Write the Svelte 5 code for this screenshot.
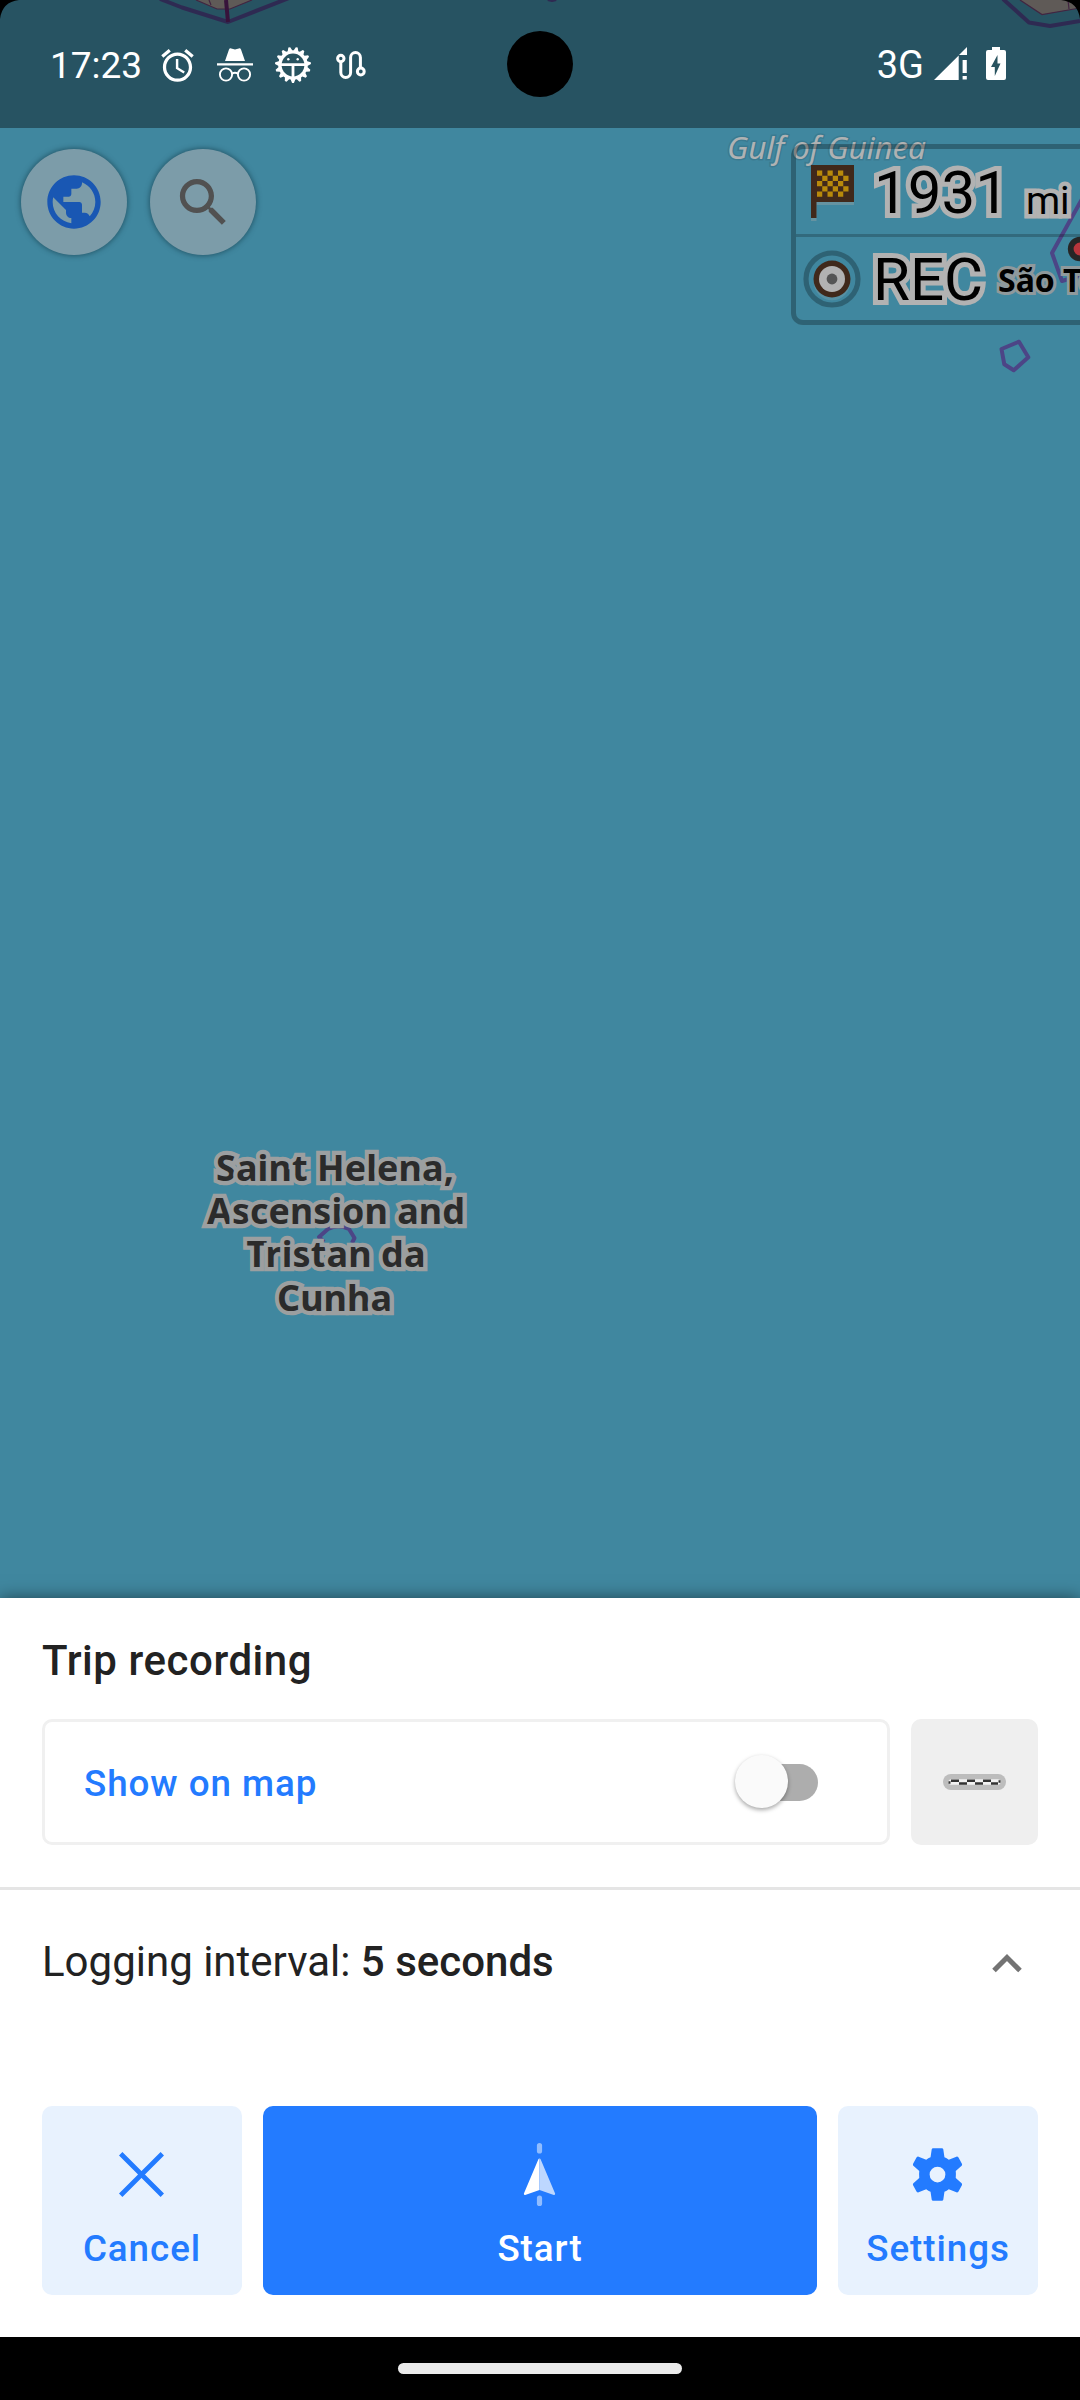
<script>
  // Toothed outline of the bug icon, 15 teeth around the centre (18, 18)
  const teeth = 15;
  const bugTeeth = Array.from({ length: teeth * 4 }, (_, i) => {
    const outer = i % 4 < 2;
    const r = outer ? 18 : 14.8;
    const a = ((i - 0.5) / (teeth * 4)) * Math.PI * 2 - Math.PI / 2 + 0.21;
    return `${(18 + r * Math.cos(a)).toFixed(2)},${(18 + r * Math.sin(a)).toFixed(2)}`;
  }).join(' ');

  const flagCells = Array.from({ length: 30 }, (_, i) => ({ x: i % 6, y: Math.floor(i / 6) }))
    .filter((c) => (c.x + c.y) % 2 === 0);

  const countryLines = [
    { text: 'Saint Helena,', x: 335, y: 1180.5, w: 238 },
    { text: 'Ascension and', x: 336, y: 1224, w: 258 },
    { text: 'Tristan da', x: 336, y: 1267, w: 179 },
    { text: 'Cunha', x: 334.5, y: 1311, w: 115 }
  ];

  let showOnMap = $state(false);
</script>

<div class="screen">
  <svg class="map" width="1080" height="1598" viewBox="0 0 1080 1598">
    <g fill="#9a938d">
      <path d="M196 0L217 9H230L252 0Z" />
      <path d="M1020 0L1042 14.5L1080 8V0Z" />
    </g>
    <g fill="none" stroke="#6b3c6a" stroke-width="1.2">
      <path d="M196 0L217 9H230L252 0M209 0L211 5M1020 0L1042 14.5L1080 8M1068 0L1069 9" />
    </g>
    <g fill="none" stroke="#4c4586" stroke-width="4" stroke-linejoin="round">
      <path d="M160 -1L182 7.500L228 22L289 -2" />
      <path d="M226 0L228 22" stroke="#5a2060" />
      <path d="M1003 -1L1029 22.500L1050 26L1080 21" />
      <path d="M548 -1L552 0L556 -1" />
      <path d="M1082 199L1052 253L1062 281L1082 275" />
      <path d="M1001.500 349L1019 341.700L1028.300 357.300L1013.700 370.300L1004.300 364.300Z" />
      <path d="M324 1242L319 1237L328 1229Q338 1224 349 1229L354.500 1238L352 1243" />
    </g>
    <text class="sea" x="727" y="158.500" textLength="199">Gulf of Guinea</text>
    <g class="country">
      {#each countryLines as line}
        <text x={line.x} y={line.y} textLength={line.w}>{line.text}</text>
      {/each}
    </g>
  </svg>

  <header class="status">
    <span class="time">17:23</span>
    <div class="notifications">
      <svg class="alarm" width="39" height="39" viewBox="0 0 24 24" fill="#fff">
        <path d="M22 5.720l-4.600-3.860-1.290 1.530 4.600 3.860L22 5.720zM7.880 3.390L6.600 1.860 2 5.710l1.290 1.530 4.590-3.850zM12.500 8H11v6l4.750 2.850.75-1.230-4-2.370V8zM12 4c-4.970 0-9 4.030-9 9s4.020 9 9 9c4.970 0 9-4.030 9-9s-4.030-9-9-9zm0 16c-3.870 0-7-3.130-7-7s3.130-7 7-7 7 3.130 7 7-3.130 7-7 7z" />
      </svg>
      <svg class="incognito" width="36" height="36" viewBox="0 0 36 36">
        <path d="M8 14L12 2.500Q12.600 1 14.200 1.400L18 2.400L21.800 1.400Q23.400 1 24 2.500L28 14Z" fill="#fff" />
        <path d="M0 16.200H36V18.600H0Z" fill="#fff" />
        <g fill="none" stroke="#fff" stroke-width="1.900">
          <circle cx="9" cy="27.500" r="6.100" />
          <circle cx="27" cy="27.500" r="6.100" />
          <path d="M15 26.800Q18 24.600 21 26.800" />
        </g>
      </svg>
      <svg class="bug" width="36" height="36" viewBox="0 0 36 36">
        <polygon points={bugTeeth} fill="#fff" />
        <circle cx="18" cy="18" r="11.400" fill="#28535f" />
        <path d="M6 16.200H30V19H19.400V31H16.600V19H6Z" fill="#fff" />
        <circle cx="13.300" cy="12.300" r="1.200" fill="#fff" />
        <circle cx="22.700" cy="12.300" r="1.200" fill="#fff" />
      </svg>
      <svg class="route" width="30" height="30" viewBox="0 0 30 30" fill="none" stroke="#fff" stroke-width="3">
        <circle cx="4.800" cy="8.500" r="3.200" />
        <path d="M4.800 12V22.500a4.900 4.900 0 0 0 9.800 0V7.500a4.900 4.900 0 0 1 9.800 0V18" />
        <circle cx="24.800" cy="21.500" r="3.400" />
      </svg>
    </div>
    <span class="camera"></span>
    <div class="system">
      <span class="network">3G</span>
      <svg width="33" height="33" viewBox="0 0 33 33" fill="#fff">
        <path d="M0 33L24.700 8.500V33ZM25 8L33 0V8ZM28.600 13H32.800V26H28.600ZM28.600 29H32.800V32.500H28.600Z" />
      </svg>
      <svg class="battery" width="20" height="33" viewBox="0 0 20 33">
        <path d="M6 0H14V3H18Q20 3 20 5V31Q20 33 18 33H2Q0 33 0 31V5Q0 3 2 3H6Z" fill="#fff" />
        <path d="M11.500 8L5 20H8.800V29L14.500 16.500H11.500Z" fill="#28535f" />
      </svg>
    </div>
  </header>

  <main class="map-controls">
    <nav class="round-buttons">
      <button class="round" aria-label="Configure map">
        <svg width="64" height="64" viewBox="0 0 24 24" fill="#1957b3">
          <path d="M12 2C6.480 2 2 6.480 2 12s4.480 10 10 10 10-4.480 10-10S17.520 2 12 2zm-1 17.930c-3.950-.49-7-3.850-7-7.930 0-.62.080-1.210.210-1.790L9 15v1c0 1.100.9 2 2 2v1.930zm6.900-2.540c-.26-.81-1-1.390-1.900-1.390h-1v-3c0-.55-.45-1-1-1H8v-2h2c.55 0 1-.45 1-1V7h2c1.100 0 2-.9 2-2v-.41c2.930 1.190 5 4.060 5 7.410 0 2.080-.8 3.970-2.100 5.390z" />
        </svg>
      </button>
      <button class="round" aria-label="Search">
        <svg width="63" height="63" viewBox="0 0 24 24" fill="#515151">
          <path d="M15.500 14h-.79l-.28-.27C15.410 12.590 16 11.110 16 9.500 16 5.910 13.090 3 9.500 3S3 5.910 3 9.500 5.910 16 9.500 16c1.610 0 3.090-.59 4.230-1.570l.27.28v.79l5 4.990L20.490 19l-4.990-5zm-6 0C7.010 14 5 11.990 5 9.500S7.010 5 9.500 5 14 7.010 14 9.500 11.990 14 9.500 14z" />
        </svg>
      </button>
    </nav>
    <section class="widgets">
      <div class="widget">
        <svg class="flag" width="43" height="56" viewBox="0 0 43 56">
          <path d="M0 3H43V40H5.500V56H0Z" fill="#6593a1" />
          <path d="M0 0H43V37H5.500V53H0Z" fill="#40291b" />
          {#each flagCells as c}
            <rect x={6 + c.x * 5.25} y={5.5 + c.y * 5.25} width="5.250" height="5.250" fill="#b88a0b" />
          {/each}
        </svg>
        <span class="value">1931</span>
        <span class="unit">mi</span>
      </div>
      <div class="widget">
        <svg class="rec" width="58" height="58" viewBox="0 0 58 58">
          <circle cx="29" cy="29" r="26" fill="none" stroke="#000" stroke-opacity="0.27" stroke-width="5.200" />
          <circle cx="29" cy="32" r="18.300" fill="#5790a3" />
          <circle cx="29" cy="29" r="18.500" fill="#40291b" />
          <circle cx="29" cy="29" r="13" fill="#b2b2b2" />
          <circle cx="29" cy="29" r="5.400" fill="#555" />
        </svg>
        <span class="value">REC</span>
      </div>
    </section>
  </main>

  <!-- Island label and marker drawn above the widget panel -->
  <svg class="island" width="90" height="100" viewBox="990 220 90 100">
    <circle cx="1080" cy="249" r="9.300" fill="#b8363c" stroke="#262626" stroke-width="5.800" />
    <text x="998" y="292">São Tomé</text>
  </svg>

  <section class="sheet">
    <h1>Trip recording</h1>
    <div class="options">
      <button class="show" onclick={() => (showOnMap = !showOnMap)}>
        <span class="label">Show on map</span>
        <span class="switch" class:on={showOnMap}><i></i></span>
      </button>
      <button class="line-style" aria-label="Line appearance">
        <svg width="63" height="16" viewBox="0 0 63 16">
          <rect width="63" height="16" rx="8" fill="#bdbdbd" />
          <rect x="5.500" y="5.300" width="52" height="5.400" rx="2.700" fill="#f1f1f1" />
          <path d="M8 6.700H16M24 6.700H32M40 6.700H48M16 9.500H24M32 9.500H40M48 9.500H55M55.500 7.500H57.500M5.500 8.500H7.500" stroke="#333" stroke-width="2.600" />
        </svg>
      </button>
    </div>
    <div class="interval">
      <p>Logging interval: <b>5 seconds</b></p>
      <svg width="30" height="19" viewBox="0 0 30 19">
        <path d="M2 16.600L15 3.600L28 16.600" fill="none" stroke="#737373" stroke-width="5" />
      </svg>
    </div>
    <div class="actions">
      <button>
        <svg width="63" height="63" viewBox="0 0 63 63">
          <path d="M10.700 10.700L52.300 52.300M52.300 10.700L10.700 52.300" stroke="#237bff" stroke-width="4.800" />
        </svg>
        <span>Cancel</span>
      </button>
      <button class="primary">
        <svg width="63" height="63" viewBox="0 0 63 63">
          <rect x="28.900" y="0" width="5.200" height="10.500" rx="2.600" fill="#91bdff" />
          <rect x="28.900" y="52.500" width="5.200" height="10.500" rx="2.600" fill="#91bdff" />
          <path d="M31.500 15.500Q30.700 15.500 30.400 16.300L15.900 50.500Q15.600 52.200 17.200 51.900L31.500 46.900Z" fill="#fff" />
          <path d="M31.500 15.500Q32.300 15.500 32.600 16.300L47.100 50.500Q47.400 52.200 45.800 51.900L31.500 46.900Z" fill="#bdd7ff" />
        </svg>
        <span>Start</span>
      </button>
      <button>
        <svg width="63" height="63" viewBox="0 0 24 24" fill="#237bff">
          <path fill-rule="evenodd" d="M10.300 2H13.700Q14.100 2 14.200 2.400L14.650 5.400Q15.500 5.700 16.300 6.350L19.200 5.200Q19.700 5.100 20 5.500L21.300 7.900Q21.500 8.400 21.200 8.700L18.950 10.700Q19.100 12 18.950 13.300L21.200 15.300Q21.500 15.600 21.300 16.100L20 18.500Q19.700 18.900 19.200 18.800L16.300 17.650Q15.500 18.300 14.650 18.600L14.200 21.600Q14.100 22 13.700 22H10.300Q9.900 22 9.800 21.600L9.350 18.600Q8.500 18.300 7.700 17.650L4.800 18.800Q4.300 18.900 4 18.500L2.700 16.100Q2.500 15.600 2.800 15.300L5.050 13.300Q4.900 12 5.050 10.700L2.800 8.700Q2.500 8.400 2.700 7.900L4 5.500Q4.300 5.100 4.800 5.200L7.700 6.350Q8.500 5.700 9.350 5.400L9.800 2.400Q9.900 2 10.300 2ZM12 9a3 3 0 1 0 0 6a3 3 0 0 0 0-6Z" />
        </svg>
        <span>Settings</span>
      </button>
    </div>
  </section>
  <footer class="gesture"><span></span></footer>
  <svg class="corners" width="1080" height="20" viewBox="0 0 1080 20">
    <path d="M0 0H19Q2 2 0 19ZM1080 0V19Q1078 2 1061 0Z" fill="#000" />
  </svg>
</div>

<style>
  :global(body) {
    margin: 0;
    background: #000;
  }

  .screen {
    position: relative;
    display: flex;
    flex-direction: column;
    width: 1080px;
    height: 2400px;
    overflow: hidden;
    background: #40879f;
    font-family: Roboto, sans-serif;
    color: #222;
  }

  button {
    box-sizing: border-box;
    margin: 0;
    padding: 0;
    border: 0;
    font: inherit;
    color: inherit;
  }

  svg {
    display: block;
    flex: none;
  }

  .map,
  .corners {
    position: absolute;
    top: 0;
    left: 0;
  }

  .sea {
    font: italic 400 31.5px 'Noto Sans', sans-serif;
    fill: #afb2b3;
    stroke: rgba(48, 100, 118, 0.35);
    stroke-width: 3px;
    paint-order: stroke;
  }

  .country {
    font: 700 36px 'Noto Sans', sans-serif;
    text-anchor: middle;
    fill: #2b2b2b;
    stroke: #9c9fa0;
    stroke-width: 8.5px;
    paint-order: stroke;
  }

  .status {
    position: relative;
    box-sizing: border-box;
    display: flex;
    align-items: center;
    height: 128px;
    padding: 2px 74px 0 50px;
    background: rgba(0, 0, 0, 0.385);
    color: #fff;
  }

  .time {
    width: 108px;
    padding-top: 2px;
    font-size: 37px;
    line-height: 44px;
    white-space: nowrap;
  }

  .notifications {
    display: flex;
    align-items: center;
  }

  .incognito {
    margin-left: 20px;
  }

  .bug {
    margin-left: 22px;
  }

  .route {
    margin-left: 25px;
  }

  .camera {
    position: absolute;
    top: 31px;
    left: 507px;
    width: 66px;
    height: 66px;
    border-radius: 50%;
    background: #000;
  }

  .system {
    display: flex;
    align-items: center;
    margin-left: auto;
  }

  .system svg {
    margin-top: -3px;
  }

  .network {
    margin-right: 10px;
    font-size: 38px;
    line-height: 44px;
  }

  .system .battery {
    margin-left: 19px;
  }

  .map-controls {
    position: relative;
    display: flex;
    justify-content: space-between;
    align-items: flex-start;
    height: 1470px;
  }

  .round-buttons {
    display: flex;
    gap: 23px;
    padding: 21px 0 0 21px;
  }

  .round {
    display: flex;
    align-items: center;
    justify-content: center;
    width: 106px;
    height: 106px;
    border-radius: 50%;
    background: #7c9ca9;
    box-shadow: 0 0 5px 1px rgba(20, 60, 75, 0.6);
  }

  .widgets {
    box-sizing: border-box;
    width: 289px;
    height: 181px;
    margin-top: 16px;
    border: 5px solid rgba(0, 0, 0, 0.27);
    border-right: 0;
    border-radius: 12px 0 0 12px;
    color: #000;
  }

  .widget {
    display: flex;
    align-items: center;
    box-sizing: border-box;
    height: 85px;
    white-space: nowrap;
  }

  .widget:first-child {
    height: 88px;
    border-bottom: 3px solid rgba(0, 0, 0, 0.21);
  }

  .flag {
    margin: 3px 20px 0 15px;
  }

  .rec {
    margin: 0 12px 2px 7px;
  }

  .value,
  .unit {
    -webkit-text-stroke: 10px #b2b2b2;
    paint-order: stroke;
  }

  .value {
    font-size: 60px;
    line-height: 70px;
  }

  .widget:first-child .value {
    padding-top: 3px;
  }

  .unit {
    margin: 19px 0 0 17px;
    font-size: 39px;
    line-height: 46px;
    -webkit-text-stroke-width: 9px;
  }

  .island {
    position: absolute;
    left: 990px;
    top: 220px;
  }

  .island text {
    font: 700 32px 'Noto Sans', sans-serif;
    fill: #000;
    stroke: #8f999c;
    stroke-width: 6px;
    paint-order: stroke;
  }

  .sheet {
    position: relative;
    box-sizing: border-box;
    height: 739px;
    background: #fff;
    box-shadow: 0 0 16px rgba(0, 0, 0, 0.5);
  }

  h1 {
    margin: 0;
    padding: 38px 42px 33px;
    font-size: 42px;
    line-height: 50px;
    font-weight: 500;
    letter-spacing: 0.55px;
  }

  .options {
    display: grid;
    grid-template-columns: 848px 127px;
    gap: 21px;
    height: 126px;
    padding: 0 42px;
  }

  .show {
    display: flex;
    align-items: center;
    justify-content: space-between;
    padding: 0 69px 0 39px;
    border: 3px solid #f0f0f0;
    border-radius: 10px;
    background: #fff;
    color: #237bff;
    font-size: 36.75px;
    font-weight: 500;
    letter-spacing: 0.95px;
  }

  .label {
    padding-top: 2px;
  }

  .switch {
    position: relative;
    width: 76px;
    height: 37px;
    margin-top: 1px;
    border-radius: 19px;
    background: #adadad;
  }

  .switch i {
    position: absolute;
    top: -9px;
    left: -7px;
    width: 53px;
    height: 53px;
    border-radius: 50%;
    background: #fafafa;
    box-shadow: 0 2px 4px rgba(0, 0, 0, 0.35);
  }

  .switch.on i {
    left: 30px;
  }

  .line-style {
    display: flex;
    align-items: center;
    justify-content: center;
    border-radius: 10px;
    background: #efefef;
  }

  .interval {
    box-sizing: border-box;
    display: flex;
    align-items: center;
    justify-content: space-between;
    height: 150px;
    margin-top: 42px;
    padding: 0 58px 0 42px;
    border-top: 3px solid #e5e5e5;
  }

  .interval p {
    margin: 0 0 3px;
    font-size: 42px;
    line-height: 50px;
    white-space: pre;
  }

  .interval b {
    font-weight: 500;
  }

  .actions {
    display: grid;
    grid-template-columns: 200px 554px 200px;
    gap: 21px;
    height: 189px;
    margin-top: 69px;
    padding: 0 42px;
  }

  .actions button {
    display: flex;
    flex-direction: column;
    align-items: center;
    padding-top: 37px;
    border-radius: 10px;
    background: #e8f2fe;
    color: #237bff;
    font-size: 36.75px;
    line-height: 44px;
    font-weight: 500;
    letter-spacing: 0.95px;
  }

  .actions button.primary {
    background: #237bff;
    color: #fff;
  }

  .actions svg {
    margin-right: 1px;
  }

  .actions span {
    margin-top: 21px;
  }

  .gesture {
    position: relative;
    display: flex;
    justify-content: center;
    height: 63px;
    background: #000;
  }

  .gesture span {
    width: 284px;
    height: 11px;
    margin-top: 26px;
    border-radius: 6px;
    background: #ebebeb;
  }
</style>
